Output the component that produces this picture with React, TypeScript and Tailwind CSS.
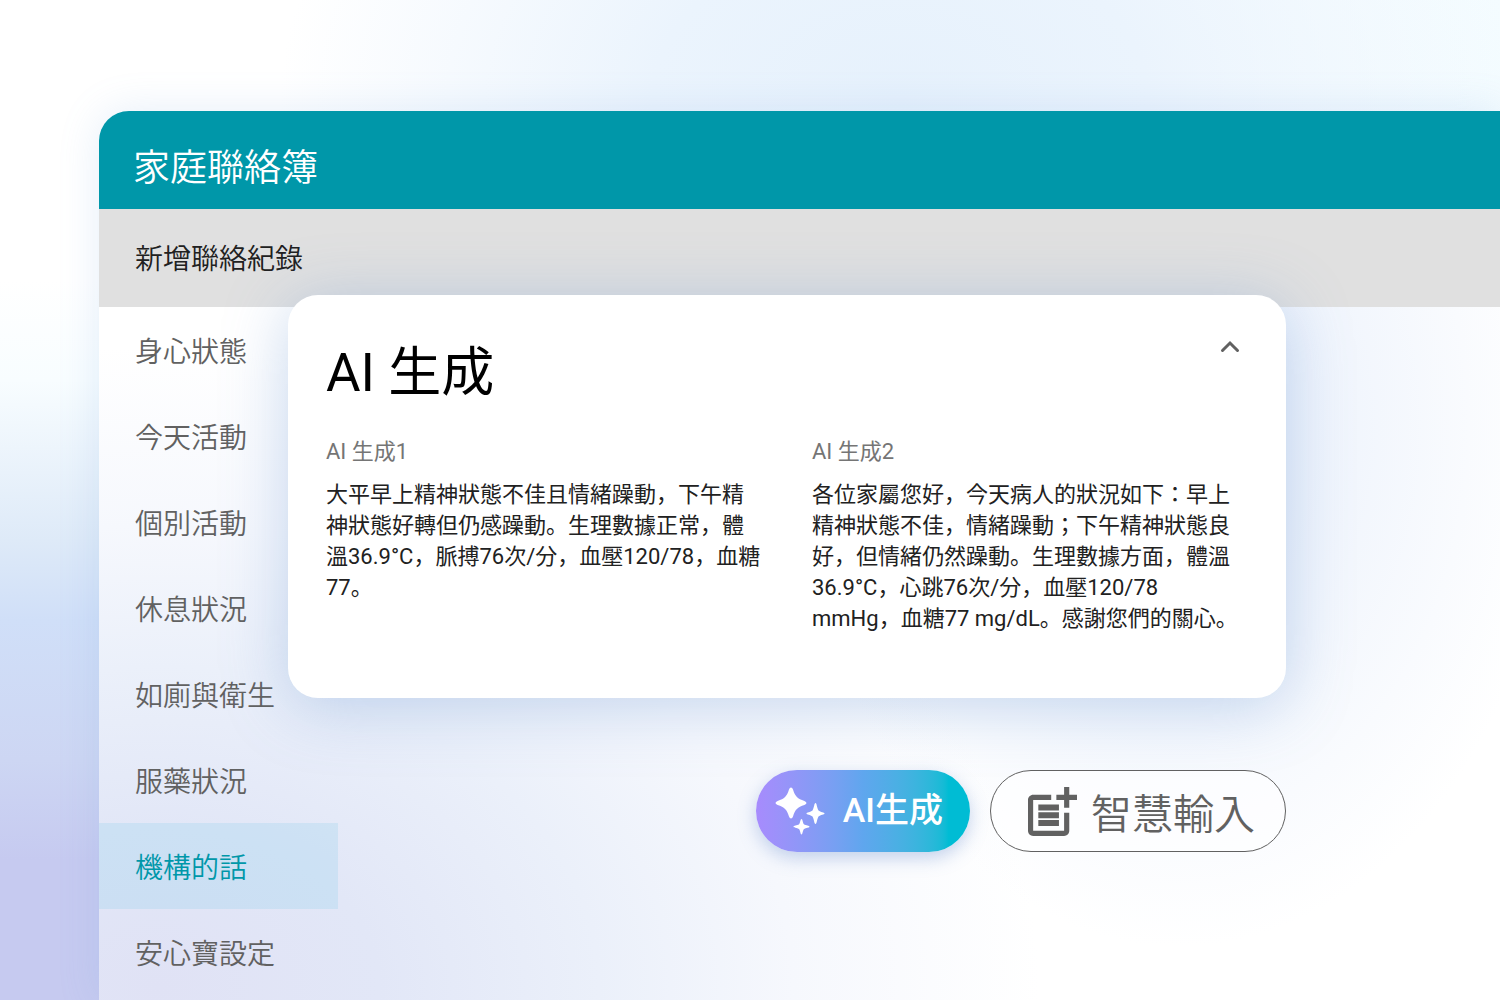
import React, { useState } from "react";

const sections = [
  "身心狀態",
  "今天活動",
  "個別活動",
  "休息狀況",
  "如廁與衛生",
  "服藥狀況",
  "機構的話",
  "安心寶設定",
];

const results = [
  {
    title: "AI 生成1",
    text: "大平早上精神狀態不佳且情緒躁動，下午精神狀態好轉但仍感躁動。生理數據正常，體溫36.9°C，脈搏76次/分，血壓120/78，血糖77。",
  },
  {
    title: "AI 生成2",
    text: "各位家屬您好，今天病人的狀況如下：早上精神狀態不佳，情緒躁動；下午精神狀態良好，但情緒仍然躁動。生理數據方面，體溫36.9°C，心跳76次/分，血壓120/78\nmmHg，血糖77 mg/dL。感謝您們的關心。",
  },
];

function SparkleIcon() {
  return (
    <svg viewBox="0 0 50 48" className="h-12 w-[50px] shrink-0" fill="currentColor" aria-hidden="true">
      <path d="M16 .5Q17.300 .5 18 2.600C20.200 9.500 22.500 11.800 29.400 14Q31.500 14.800 31.500 16T29.400 18C22.500 20.200 20.200 22.500 18 29.400Q17.300 31.500 16 31.500T14 29.400C11.800 22.500 9.500 20.200 2.600 18Q.5 17.200 .5 16T2.600 14C9.500 11.800 11.800 9.500 14 2.600Q14.700 .5 16 .5Z" />
      <path d="M40.500 16C41.800 16 41.800 20.500 43.500 23.500C45.500 25.200 49.500 25.300 49.500 26.500S45.500 27.800 43.500 29.500C41.800 32.500 41.800 37 40.500 37S39.200 32.500 37.500 29.500C35.500 27.800 31.500 27.700 31.500 26.500S35.500 25.200 37.500 23.500C39.200 20.500 39.200 16 40.500 16Z" />
      <path d="M26.500 32C27.600 32 27.500 35 28.900 37.300C31 38.700 34.500 38.600 34.500 39.700S31 40.700 28.900 42.100C27.500 44.500 27.600 47.500 26.500 47.500S25.500 44.500 24.100 42.100C22 40.700 18.500 40.800 18.500 39.700S22 38.700 24.100 37.300C25.500 35 25.400 32 26.500 32Z" />
    </svg>
  );
}

function PostAddIcon() {
  return (
    <svg viewBox="3 2 19 19" className="size-[49px] shrink-0" fill="currentColor" aria-hidden="true">
      <path d="M17 19H5V7h7V5H5c-1.100 0-2 .9-2 2v12c0 1.100.9 2 2 2h12c1.100 0 2-.9 2-2v-7h-2v7z" />
      <path d="M19 2h-2v3h-3v2h3v3h2V7h3V5h-3V2z" />
      <path d="M7 8.800h8v2.300H7zM7 11.800h8v2.300H7zM7 14.800h8v2.300H7z" />
    </svg>
  );
}

export default function App() {
  const [active, setActive] = useState("機構的話");

  return (
    <div
      lang="ja"
      className="min-h-screen overflow-hidden bg-white bg-[radial-gradient(ellipse_620px_420px_at_900px_100px,#e6f1fc_0%,#ebf4fd_40%,transparent_100%),linear-gradient(90deg,transparent_60%,#f4fcff_100%),linear-gradient(180deg,#ffffff_0%,#ffffff_28%,#f8fdff_38%,#deeaf8_54%,#d0dff8_62%,#cdd6f3_76%,#c6caf0_86%,#c6caf0_100%)] pt-[111px] pl-[99px] font-[Roboto,'Noto_Sans_CJK_JP',sans-serif]"
    >
      <div className="flex min-h-[calc(100vh-111px)] flex-col rounded-tl-[30px] bg-white shadow-[0_0_40px_rgba(110,160,220,0.18)]">
        <header className="flex h-[98px] items-center rounded-tl-[30px] bg-[#0097a9] px-[34px] pt-[18px]">
          <h1 className="text-[37px] leading-[54px] font-[350] text-white">家庭聯絡簿</h1>
        </header>
        <div className="flex h-[98px] items-center bg-[#e0e0e0] px-9 pt-1">
          <h2 className="text-[28px] leading-10 font-[350] text-[#212121]">新增聯絡紀錄</h2>
        </div>
        <div className="flex flex-1 bg-[radial-gradient(ellipse_380px_520px_at_1080px_120px,#e6eefb_0%,transparent_100%),radial-gradient(ellipse_880px_640px_at_60px_680px,#e0e2f5_0%,#e2e7f7_25%,#ebf0fa_50%,#f6f8fd_72%,transparent_100%)]">
          <nav className="w-[239px] shrink-0">
            {sections.map((name) => (
              <a
                key={name}
                href="#"
                onClick={() => setActive(name)}
                className={
                  name === active
                    ? "flex h-[86px] items-center bg-[#30b8e0]/12 px-9 pt-1.5 text-[28px] leading-10 font-[350] text-[#0097a9]"
                    : "flex h-[86px] items-center px-9 pt-1.5 text-[28px] leading-10 font-[350] text-[#616161]"
                }
              >
                {name}
              </a>
            ))}
          </nav>
          <main className="relative -mt-3 -ml-[50px] max-w-[998px] flex-1">
            <section className="min-h-[403px] rounded-[30px] bg-white pt-8 pr-9 pb-[60px] pl-[38px] shadow-[0_8px_64px_rgba(95,140,205,0.34)]">
              <div className="flex items-start justify-between">
                <h2 className="pt-[14px] text-[53px] leading-[64px] text-black">AI 生成</h2>
                <button type="button" aria-label="收合" className="p-2 text-[#616161]">
                  <svg viewBox="0 0 24 24" className="size-6" fill="none" stroke="currentColor" strokeWidth="3" strokeLinecap="round" aria-hidden="true">
                    <path d="M4.500 15.500 12 8l7.500 7.500" />
                  </svg>
                </button>
              </div>
              <div className="mt-[31px] grid grid-cols-2 gap-12">
                {results.map((item) => (
                  <article key={item.title}>
                    <h3 className="text-[22px] leading-8 text-[#757575]">{item.title}</h3>
                    <p className="mt-[11px] text-[22px] leading-[31px] whitespace-pre-line text-[#212121]">{item.text}</p>
                  </article>
                ))}
              </div>
            </section>
            <div className="mt-[72px] flex items-center justify-end gap-5">
              <button
                type="button"
                className="flex h-[82px] items-center gap-[18px] rounded-full bg-linear-to-r from-[#a78bfd] via-[#5fa6ee] to-[#00bcd4] to-90% pr-[27px] pl-[19px] text-white shadow-[0_6px_18px_rgba(90,130,200,0.35)]"
              >
                <SparkleIcon />
                <span className="pb-0.5 text-[34px] leading-[50px] font-medium">AI生成</span>
              </button>
              <button
                type="button"
                className="flex h-[82px] items-center gap-[14px] rounded-full border border-[#616161] bg-white/60 pr-[30px] pl-[37px] text-[#616161]"
              >
                <PostAddIcon />
                <span className="pt-2 text-[41px] leading-[60px] font-[350]">智慧輸入</span>
              </button>
            </div>
          </main>
        </div>
      </div>
    </div>
  );
}
